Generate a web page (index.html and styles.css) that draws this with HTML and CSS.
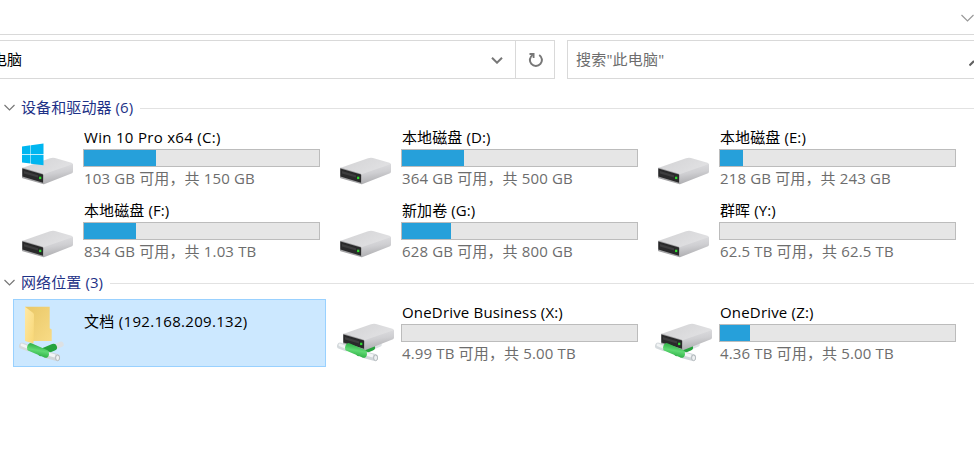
FILE: index.html
```
<!DOCTYPE html>
<html lang="zh-CN">
<head>
    <meta charset="UTF-8">
    <meta name="viewport" content="width=device-width, initial-scale=1.0">
    <title>此电脑</title>
    <link rel="stylesheet" href="styles.css">
</head>
<body>
    <svg class="defs" width="0" height="0">
        <defs>
            <linearGradient id="top" x1="0" y1="0" x2="1" y2="0.6">
                <stop offset="0" stop-color="#d2d2d4"/>
                <stop offset="1" stop-color="#e2e2e4"/>
            </linearGradient>
            <linearGradient id="side" x1="0" y1="0" x2="0.2" y2="1">
                <stop offset="0" stop-color="#e0e0e3"/>
                <stop offset="0.5" stop-color="#cfcfd2"/>
                <stop offset="1" stop-color="#adadb0"/>
            </linearGradient>
            <linearGradient id="green" x1="0.6" y1="0" x2="0.35" y2="1">
                <stop offset="0" stop-color="#22a43a"/>
                <stop offset="0.5" stop-color="#5fd973"/>
                <stop offset="1" stop-color="#23a63b"/>
            </linearGradient>
            <linearGradient id="flap" x1="0" y1="0" x2="1" y2="1">
                <stop offset="0" stop-color="#ffe9a6"/>
                <stop offset="1" stop-color="#f8d775"/>
            </linearGradient>
            <linearGradient id="back" x1="0" y1="0" x2="1" y2="1">
                <stop offset="0" stop-color="#e9c766"/>
                <stop offset="1" stop-color="#f8db86"/>
            </linearGradient>
            <symbol id="drive" viewBox="0 0 70 68">
                <path d="M9 44 L37 34.2 Q39.5 33.3 42 33.9 L58.5 38.8 Q60 39.3 60 41 L31 52.5 Z" fill="url(#top)"/>
                <path d="M30 51.5 Q30.5 50.2 32 49.7 L60 40 V47.6 Q60 48.8 59 49.2 L31 60.3 L30 60 Z" fill="url(#side)"/>
                <path d="M9 44.2 Q9 43.5 10 43.7 L29.2 49.5 Q30.7 50 30.7 51.5 V60.3 L9.6 54.3 Q9 54 9 53.2 Z" fill="#a2a2a4"/>
                <path d="M9.4 44.4 L30 50.5 V58.8 L9.4 52.6 Z" fill="#29292a"/>
                <path d="M11 47 L25 51.2 V53.6 L11 49.4 Z" fill="#3d3d3e"/>
                <rect x="26.1" y="52.7" width="2.2" height="2.4" fill="#2fdf2f"/>
            </symbol>
            <symbol id="windows" viewBox="0 0 70 68">
                <path d="M9 22.4 L17.5 21.3 V30.3 H9 Z M18 21.2 L30.5 19.5 V30.3 H18 Z M9 30.9 H17.5 V39.6 L9 38.5 Z M18 30.9 H30.5 V41.3 L18 39.7 Z" fill="#00b6f0"/>
            </symbol>
            <symbol id="branch" viewBox="0 0 70 68">
                <path d="M40 48.8 L48 45.3" stroke="#dde1e4" stroke-width="5.4" stroke-linecap="round"/>
                <path d="M28 53.5 L40.5 48.3" stroke="#25a33c" stroke-width="7" stroke-linecap="round"/>
            </symbol>
            <symbol id="pipe" viewBox="0 0 70 68">
                <path d="M9.2 46.8 L15 49" stroke="#d5dadd" stroke-width="6.4" stroke-linecap="round"/>
                <path d="M9 46 L14 48" stroke="#f2f4f5" stroke-width="2.8" stroke-linecap="round"/>
                <path d="M34 55.8 L43.5 58.4" stroke="#d0d6d9" stroke-width="7" stroke-linecap="round"/>
                <path d="M35 55 L42 57" stroke="#f3f5f6" stroke-width="3"/>
                <path d="M17.5 43.9 Q14.6 44.6 14 48.4 Q13.9 51 15.5 51.8 L32 58.8 Q35.3 59.3 36 55.5 Q36.2 52.3 34.6 51.3 L19 44.4 Q18.2 43.9 17.5 43.9 Z" fill="url(#green)"/>
                <ellipse cx="44.6" cy="58.9" rx="2" ry="2.8" fill="#eef1f2" stroke="#a8aeb2" stroke-width="0.8"/>
            </symbol>
            <symbol id="folder" viewBox="0 0 70 68">
                <path d="M12 7.7 H36.7 V29.2 L38.7 30.5 V42 H19 Z" fill="url(#back)"/>
                <path d="M12 7.7 L20.2 14 Q21 14.8 21 16 L20.5 44.5 L12 42 Z" fill="url(#flap)"/>
            </symbol>
        </defs>
    </svg>

    <div class="ribbon">
        <svg width="14" height="10" viewBox="0 0 14 10"><path d="M1.5 2 L7.5 8 L13.5 2" stroke="#999" stroke-width="1.2" fill="none"/></svg>
    </div>

    <div class="toolbar">
        <div class="address">
            <span class="path">此电脑</span>
            <svg class="drop" width="12" height="8" viewBox="0 0 12 8"><path d="M1 1.7 L6 6.7 L11 1.7" stroke="#777" stroke-width="2" fill="none"/></svg>
            <div class="refresh">
                <svg width="16" height="16" viewBox="0 0 16 16"><path d="M5.6 3 A6 6 0 1 0 12.2 3" stroke="#777" stroke-width="2" fill="none"/><path d="M2.5 2 H6.6 V6" stroke="#777" stroke-width="1.8" fill="none"/></svg>
            </div>
        </div>
        <div class="search">
            <span>搜索"此电脑"</span>
            <svg width="5" height="16" viewBox="0 0 5 16"><path d="M0.5 13.5 L5 9" stroke="#606060" stroke-width="2"/></svg>
        </div>
    </div>

    <div class="group">
        <svg width="12" height="8" viewBox="0 0 12 8"><path d="M0.5 1 L5.5 6 L10.5 1" stroke="#777" stroke-width="1.2" fill="none"/></svg>
        <h2>设备和驱动器 (6)</h2>
    </div>
    <div class="tiles">
        <div class="tile">
            <svg class="icon"><use href="#drive"/><use href="#windows"/></svg>
            <div class="info">
                <div class="name latin">Win 10 Pro x64 (C:)</div>
                <div class="bar"><div class="used" style="width: 30.6%"></div></div>
                <div class="space">103 GB 可用，共 150 GB</div>
            </div>
        </div>
        <div class="tile">
            <svg class="icon"><use href="#drive"/></svg>
            <div class="info">
                <div class="name">本地磁盘 (D:)</div>
                <div class="bar"><div class="used" style="width: 26.4%"></div></div>
                <div class="space">364 GB 可用，共 500 GB</div>
            </div>
        </div>
        <div class="tile">
            <svg class="icon"><use href="#drive"/></svg>
            <div class="info">
                <div class="name">本地磁盘 (E:)</div>
                <div class="bar"><div class="used" style="width: 9.8%"></div></div>
                <div class="space">218 GB 可用，共 243 GB</div>
            </div>
        </div>
        <div class="tile">
            <svg class="icon"><use href="#drive"/></svg>
            <div class="info">
                <div class="name">本地磁盘 (F:)</div>
                <div class="bar"><div class="used" style="width: 22.1%"></div></div>
                <div class="space">834 GB 可用，共 1.03 TB</div>
            </div>
        </div>
        <div class="tile">
            <svg class="icon"><use href="#drive"/></svg>
            <div class="info">
                <div class="name">新加卷 (G:)</div>
                <div class="bar"><div class="used" style="width: 20.9%"></div></div>
                <div class="space">628 GB 可用，共 800 GB</div>
            </div>
        </div>
        <div class="tile">
            <svg class="icon"><use href="#drive"/></svg>
            <div class="info">
                <div class="name">群晖 (Y:)</div>
                <div class="bar"></div>
                <div class="space">62.5 TB 可用，共 62.5 TB</div>
            </div>
        </div>
    </div>

    <div class="group">
        <svg width="12" height="8" viewBox="0 0 12 8"><path d="M0.5 1 L5.5 6 L10.5 1" stroke="#777" stroke-width="1.2" fill="none"/></svg>
        <h2>网络位置 (3)</h2>
    </div>
    <div class="tiles">
        <div class="tile selected">
            <svg class="icon"><use href="#folder"/><use href="#branch"/><use href="#pipe"/></svg>
            <div class="info">
                <div class="name latin">文档 (192.168.209.132)</div>
            </div>
        </div>
        <div class="tile">
            <svg class="icon"><use href="#branch"/><use href="#drive" x="3" y="-9"/><use href="#pipe"/></svg>
            <div class="info">
                <div class="name onedrive">OneDrive Business (X:)</div>
                <div class="bar"></div>
                <div class="space">4.99 TB 可用，共 5.00 TB</div>
            </div>
        </div>
        <div class="tile">
            <svg class="icon"><use href="#branch"/><use href="#drive" x="3" y="-9"/><use href="#pipe"/></svg>
            <div class="info">
                <div class="name onedrive">OneDrive (Z:)</div>
                <div class="bar"><div class="used" style="width: 12.8%"></div></div>
                <div class="space">4.36 TB 可用，共 5.00 TB</div>
            </div>
        </div>
    </div>
</body>
</html>
```

FILE: styles.css
```
* {
    box-sizing: border-box;
}

body {
    margin: 0;
    height: 458px;
    overflow: hidden;
    background: #fff;
    color: #000;
    font-family: "Open Sans", "Noto Sans CJK SC", sans-serif;
    font-size: 15px;
    line-height: 20px;
    white-space: nowrap;
}

svg {
    display: block;
    flex-shrink: 0;
}

.defs {
    position: absolute;
}

.ribbon {
    display: flex;
    justify-content: flex-end;
    height: 35px;
    padding-top: 13px;
    border-bottom: 1px solid #d9d9d9;
}

.toolbar {
    display: flex;
    gap: 12px;
    height: 39px;
    margin-top: 5px;
}

.address {
    display: flex;
    align-items: center;
    width: 555px;
    border: 1px solid #d9d9d9;
    border-left: none;
}

.path {
    flex: 1;
    margin-left: -23px;
    padding-bottom: 1px;
}

.drop {
    margin-right: 12px;
}

.refresh {
    display: flex;
    align-items: center;
    justify-content: center;
    width: 39px;
    height: 37px;
    border-left: 1px solid #d9d9d9;
}

.search {
    display: flex;
    flex: 1;
    align-items: center;
    justify-content: space-between;
    padding-left: 8px;
    border: 1px solid #d9d9d9;
    border-right: none;
    color: #6d6d6d;
    letter-spacing: 0.2px;
}

.search span {
    padding-bottom: 2px;
}

.group {
    display: flex;
    align-items: center;
    height: 20px;
    margin-top: 19px;
    padding-left: 4px;
}

.group h2 {
    margin: 0 7px 0 5px;
    padding-bottom: 2px;
    color: #1e3287;
    font-size: 15px;
    font-weight: normal;
    letter-spacing: 0.1px;
}

.group::after {
    content: "";
    flex: 1;
    height: 1px;
    background: #e2e2e2;
}

.tiles {
    display: grid;
    grid-template-columns: repeat(3, 313px);
    gap: 5px;
    margin: 6px 0 0 13px;
}

.tiles + .group {
    margin-top: 8px;
}

.tile {
    display: flex;
    height: 68px;
}

.icon {
    width: 70px;
    height: 68px;
}

.icon use {
    width: 70px;
    height: 68px;
}

.info {
    padding-top: 3px;
}

.name {
    height: 22px;
    padding-left: 1px;
    letter-spacing: 0.1px;
}

.name.latin {
    letter-spacing: 0.3px;
}

.name.onedrive {
    letter-spacing: 0.18px;
}

.bar {
    width: 237px;
    height: 18px;
    border: 1px solid #bcbcbc;
    background: #e6e6e6;
}

.used {
    height: 100%;
    background: #26a0da;
}

.space {
    padding: 1px 0 0 1px;
    color: #6d6d6d;
    letter-spacing: 0.15px;
}

.selected {
    background: #cce8ff;
    box-shadow: inset 0 0 0 1px #99d1ff;
}

.selected .info {
    padding-top: 12px;
}
```
